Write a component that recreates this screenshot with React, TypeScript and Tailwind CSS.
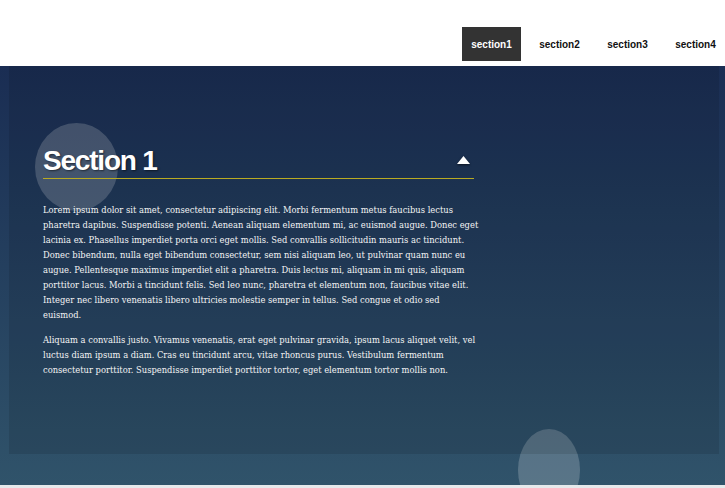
import React from "react";

const p1 = [
  "Lorem ipsum dolor sit amet, consectetur adipiscing elit. Morbi fermentum metus faucibus lectus",
  "pharetra dapibus. Suspendisse potenti. Aenean aliquam elementum mi, ac euismod augue. Donec eget",
  "lacinia ex. Phasellus imperdiet porta orci eget mollis. Sed convallis sollicitudin mauris ac tincidunt.",
  "Donec bibendum, nulla eget bibendum consectetur, sem nisi aliquam leo, ut pulvinar quam nunc eu",
  "augue. Pellentesque maximus imperdiet elit a pharetra. Duis lectus mi, aliquam in mi quis, aliquam",
  "porttitor lacus. Morbi a tincidunt felis. Sed leo nunc, pharetra et elementum non, faucibus vitae elit.",
  "Integer nec libero venenatis libero ultricies molestie semper in tellus. Sed congue et odio sed",
  "euismod.",
];
const p2 = [
  "Aliquam a convallis justo. Vivamus venenatis, erat eget pulvinar gravida, ipsum lacus aliquet velit, vel",
  "luctus diam ipsum a diam. Cras eu tincidunt arcu, vitae rhoncus purus. Vestibulum fermentum",
  "consectetur porttitor. Suspendisse imperdiet porttitor tortor, eget elementum tortor mollis non.",
];

const navItems = ["section1", "section2", "section3", "section4"];

export default function App() {
  return (
    <div className="w-[725px] h-[488px] flex flex-col bg-[#e6e9eb] overflow-hidden">
      <header className="h-[66px] shrink-0 bg-white flex items-start justify-end pr-0 pt-[27px]">
        <nav className="flex gap-[9px]">
          {navItems.map((n, i) => (
            <div
              key={n}
              className={
                "w-[59px] h-[34px] flex items-center justify-center text-[10px] font-bold font-['Liberation_Sans',Arial,sans-serif] " +
                (i === 0 ? "bg-[#333333] text-white" : "text-[#111111]")
              }
            >
              {n}
            </div>
          ))}
        </nav>
      </header>
      <main className="relative h-[419px] shrink-0 overflow-hidden bg-gradient-to-b from-[#1a2d53] to-[#30536a] pl-[9px] pr-[6px]">
        <div className="absolute left-[35px] top-[57px] w-[83px] h-[88px] rounded-[50%] bg-white/20" />
        <div className="absolute left-[518px] top-[363px] w-[62px] h-[82px] rounded-[50%] bg-white/20" />
        <div className="relative h-[388px] bg-black/10 pl-[34px] pt-[79px]">
          <div className="w-[431px]">
            <div className="flex items-end justify-between pb-[1px]">
              <h1
                className="text-[28px] leading-[32px] font-bold tracking-[-1.2px] text-white font-['Liberation_Sans',Arial,sans-serif] [text-shadow:1px_1px_2px_rgba(0,0,0,0.5)]"
              >
                Section 1
              </h1>
              <svg width="13" height="8" viewBox="0 0 13 8" className="mr-[4px] mb-[13px] drop-shadow-[0_1px_1px_rgba(0,0,0,0.6)]">
                <polygon points="6.5,0 13,8 0,8" fill="white" />
              </svg>
            </div>
            <div className="h-[1px] bg-[#b8aa22]" />
            <div className="mt-[24px] text-[8.35px] leading-[15px] text-[#f4f4f4] font-['DejaVu_Serif',serif]">
              <p className="mb-[10px]">
                {p1.map((l, i) => (
                  <span key={i} className="block whitespace-nowrap">{l}</span>
                ))}
              </p>
              <p>
                {p2.map((l, i) => (
                  <span key={i} className="block whitespace-nowrap">{l}</span>
                ))}
              </p>
            </div>
          </div>
        </div>
      </main>
    </div>
  );
}
